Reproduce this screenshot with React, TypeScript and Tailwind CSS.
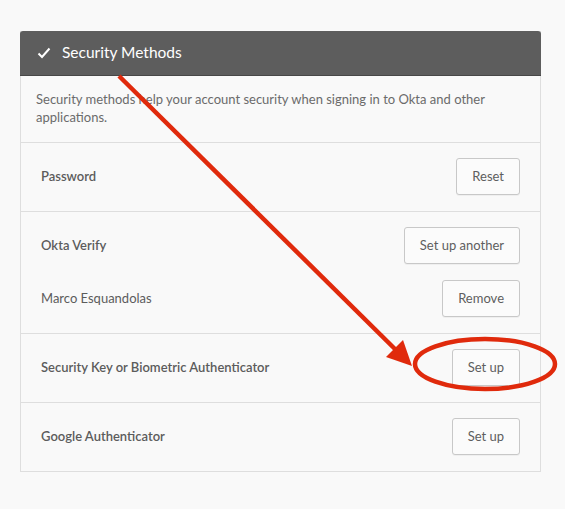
const Btn = ({ children }: { children: string }) => (
  <button className="h-[37px] px-[15px] rounded-[3px] border border-[#c8c8c8] bg-[#fbfbfb] text-[13px] text-[#5e5e5e] shadow-[0_1px_0_rgba(0,0,0,0.04)]">
    {children}
  </button>
);

const Row = ({ label, button }: { label: string; button: string }) => (
  <div className="flex items-center justify-between pt-[15px] pb-4 px-5 border-t border-[#dedede]">
    <span className="text-[13px] font-semibold text-[#5c5c5c]">{label}</span>
    <Btn>{button}</Btn>
  </div>
);

export default function App() {
  return (
    <div className="relative w-[565px] h-[509px] bg-[#f9f9f9] pt-[31px] pl-5 font-['Lato',sans-serif] overflow-hidden">
      <div className="w-[521px] border-x border-b border-[#dedede] bg-[#f9f9f9]">
        <div className="h-[45px] -mx-px bg-[#5d5d5d] rounded-t-[3px] border-b border-[#474747] flex items-center pl-[17px] gap-[11px]">
          <svg width="14" height="12" viewBox="0 0 14 12" fill="none">
            <path d="M1.5 6.5 L5 10 L12.5 1.5" stroke="white" strokeWidth="2" />
          </svg>
          <span className="text-white text-[15.5px]">Security Methods</span>
        </div>
        <p className="px-[15px] pt-[14px] pb-4 text-[13px] leading-[18px] text-[#6b6b6b]">
          Security methods help your account security when signing in to Okta and other applications.
        </p>
        <Row label="Password" button="Reset" />
        <div className="flex flex-col gap-4 pt-[15px] pb-4 px-5 border-t border-[#dedede]">
          <div className="flex items-center justify-between">
            <span className="text-[13px] font-semibold text-[#5c5c5c]">Okta Verify</span>
            <Btn>Set up another</Btn>
          </div>
          <div className="flex items-center justify-between">
            <span className="text-[13px] text-[#5c5c5c]">Marco Esquandolas</span>
            <Btn>Remove</Btn>
          </div>
        </div>
        <Row label="Security Key or Biometric Authenticator" button="Set up" />
        <Row label="Google Authenticator" button="Set up" />
      </div>

      <svg className="absolute inset-0 pointer-events-none" width="565" height="509" viewBox="0 0 565 509">
        <line x1="119" y1="76" x2="398" y2="352" stroke="#e02a0c" strokeWidth="4.5" />
        <polygon points="412,366 386,357 403,340" fill="#e02a0c" />
        <ellipse cx="485" cy="364" rx="70" ry="25" fill="none" stroke="#e02a0c" strokeWidth="4.5" />
      </svg>
    </div>
  );
}
